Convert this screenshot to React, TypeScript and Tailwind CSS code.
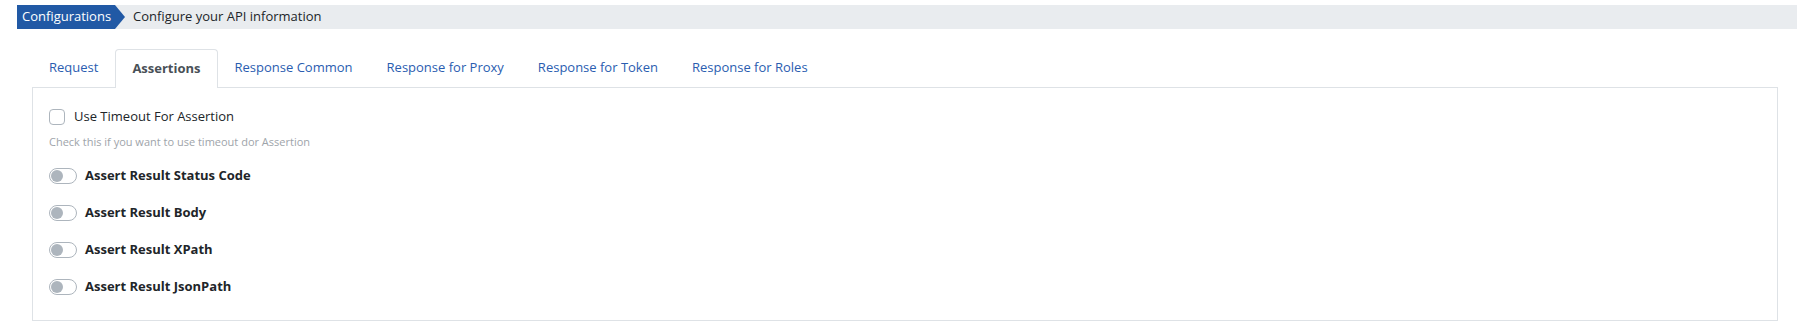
import React, { useState } from 'react';

const tabs = ['Request', 'Assertions', 'Response Common', 'Response for Proxy', 'Response for Token', 'Response for Roles'];

const switches = [
  'Assert Result Status Code',
  'Assert Result Body',
  'Assert Result XPath',
  'Assert Result JsonPath',
];

const Toggle: React.FC<{ label: string }> = ({ label }) => (
  <div className="flex items-center h-[37px]">
    <span className="w-[28px] h-[16px] rounded-full border border-[#adb5bd] bg-white flex items-center px-[1px]">
      <span className="w-[12px] h-[12px] rounded-full bg-[#adb5bd]" />
    </span>
    <span className="ml-[8px] text-[13px] font-bold text-[#212529]">{label}</span>
  </div>
);

const App: React.FC = () => {
  const [active] = useState('Assertions');

  return (
    <div className="w-[1797px] h-[334px] bg-white font-['Open_Sans','Liberation_Sans',sans-serif] text-[#212529]">
      <div className="pt-[5px] pl-[17px]">
        <div className="flex items-center h-[24px] bg-[#e9ecef]">
          <div className="flex items-center h-full">
            <span className="h-full flex items-center bg-[#2159a5] text-white text-[13px] pl-[5px] pr-[4px]">
              Configurations
            </span>
            <span className="w-0 h-0 border-y-[12px] border-y-transparent border-l-[10px] border-l-[#2159a5]" />
          </div>
          <span className="ml-[8px] text-[13px] text-[#212529]">Configure your API information</span>
        </div>
      </div>

      <div className="pt-[21px] pl-[32px] pr-[19px]">
        <div className="flex items-end h-[38px] border-b border-[#dee2e6]">
          {tabs.map((t) =>
            t === active ? (
              <div
                key={t}
                className="h-[39px] -mb-px px-[16px] flex items-center bg-white border border-b-0 border-[#dee2e6] rounded-t-[4px] text-[13px] font-bold text-[#495057]"
              >
                {t}
              </div>
            ) : (
              <div key={t} className="h-[38px] px-[17px] flex items-center text-[13px] text-[#2a5db0]">
                {t}
              </div>
            )
          )}
        </div>

        <div className="h-[233px] border border-t-0 border-[#dee2e6] pl-[16px] pt-[21px]">
          <label className="flex items-center h-[16px]">
            <span className="w-[16px] h-[16px] rounded-[4px] border border-[#adb5bd] bg-white" />
            <span className="ml-[9px] text-[13px]">Use Timeout For Assertion</span>
          </label>
          <p className="mt-[9px] text-[11px] text-[#9ea4aa]">Check this if you want to use timeout dor Assertion</p>
          <div className="mt-[7px]">
            {switches.map((s) => (
              <Toggle key={s} label={s} />
            ))}
          </div>
        </div>
      </div>
    </div>
  );
};

export default App;
